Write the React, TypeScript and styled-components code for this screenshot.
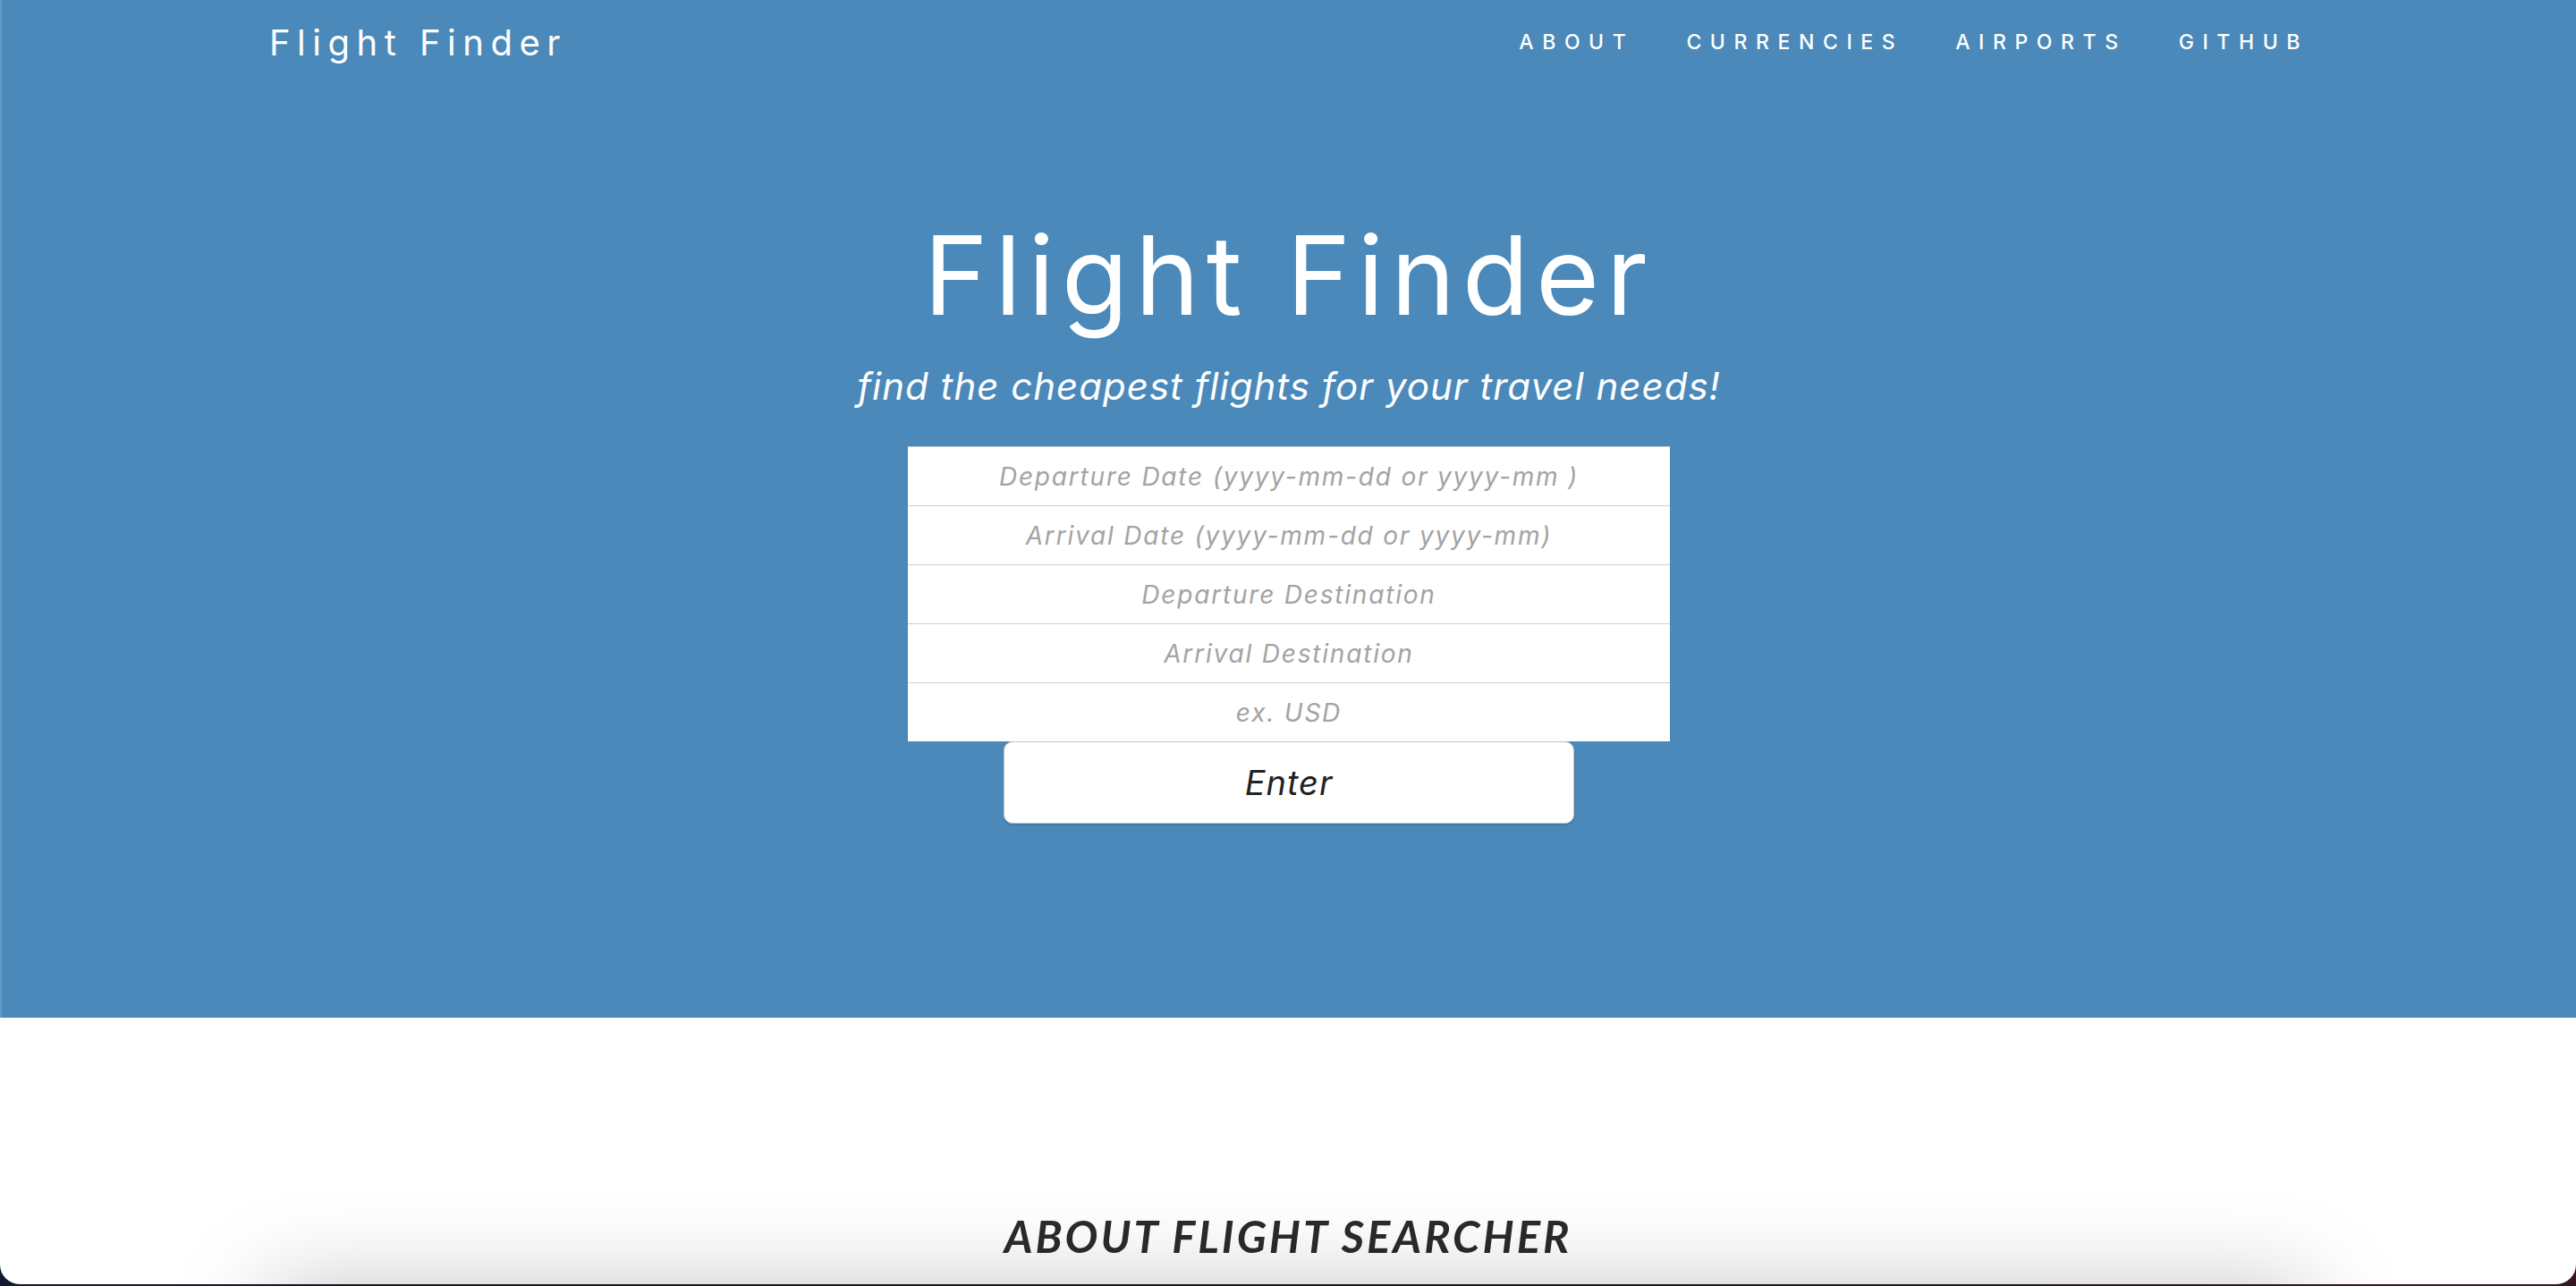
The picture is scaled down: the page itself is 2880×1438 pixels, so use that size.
import React from 'react';
import styled, { createGlobalStyle } from 'styled-components';

const GlobalStyle = createGlobalStyle`
  html, body {
    margin: 0;
    padding: 0;
    height: 100%;
  }
  body {
    background: #14161f;
    font-family: Inter, "Open Sans", sans-serif;
  }
  #root {
    height: 100%;
  }
  * {
    box-sizing: border-box;
  }
`;

const Frame = styled.div`
  height: 100vh;
  padding-bottom: 2px;
  background: linear-gradient(90deg, #0e1a2e 0%, #14161f 50%, #3a1426 100%);
`;

const Window = styled.div`
  height: 100%;
  overflow: hidden;
  background: #fff;
  border-radius: 0 0 22px 22px;
`;

const Hero = styled.header`
  height: 1138px;
  background: #4a89b9;
  border-left: 2px solid #5f9ac6;
  display: flex;
  flex-direction: column;
  align-items: center;
`;

const Nav = styled.nav`
  width: 2280px;
  height: 94px;
  display: flex;
  align-items: center;
  justify-content: space-between;
`;

const Brand = styled.a`
  color: #fff;
  font-size: 40px;
  font-weight: 400;
  letter-spacing: 7.5px;
  text-decoration: none;
`;

const NavLinks = styled.ul`
  display: flex;
  gap: 58px;
  margin: 0;
  padding: 0;
  list-style: none;
`;

const NavLink = styled.a`
  color: #fff;
  font-size: 23px;
  font-weight: 500;
  letter-spacing: 9.6px;
  text-decoration: none;
  text-transform: uppercase;
`;

const Title = styled.h1`
  margin: 153px 0 0;
  color: #fff;
  font-size: 122px;
  font-weight: 400;
  line-height: 1;
  letter-spacing: 7.6px;
`;

const Tagline = styled.p`
  margin: 42px 0 0;
  color: #fff;
  font-size: 42px;
  font-style: italic;
  line-height: 1;
  letter-spacing: 1px;
`;

const SearchForm = styled.form`
  margin-top: 46px;
  display: flex;
  flex-direction: column;
  align-items: center;
`;

const Fields = styled.div`
  width: 852px;
  display: flex;
  flex-direction: column;
  background: #fff;
`;

const Field = styled.input`
  height: 66px;
  border: none;
  border-top: 1px solid #cfcfcf;
  background: #fff;
  font-family: Inter, "Open Sans", sans-serif;
  font-size: 28px;
  font-style: italic;
  letter-spacing: 1.8px;
  text-align: center;
  outline: none;
  &::placeholder {
    color: #a3a3a3;
  }
`;

const EnterButton = styled.button`
  width: 638px;
  height: 92px;
  border: 1px solid #c4c4c4;
  border-radius: 10px;
  background: #fff;
  color: #222;
  font-family: Inter, "Open Sans", sans-serif;
  font-size: 38px;
  font-style: italic;
  letter-spacing: 1px;
  cursor: pointer;
  box-shadow: 0 2px 2px rgba(0, 0, 0, 0.12);
`;

const About = styled.section`
  padding-top: 220px;
  display: flex;
  flex-direction: column;
  align-items: center;
`;

const SectionHeading = styled.h2`
  margin: 0;
  color: #2b2b2b;
  font-family: Lato, "Liberation Sans", sans-serif;
  font-size: 49px;
  font-weight: 700;
  font-style: italic;
  line-height: 1;
  letter-spacing: 3px;
  text-transform: uppercase;
`;

const AboutCard = styled.div`
  width: 2280px;
  height: 400px;
  margin-top: 36px;
  background: #fff;
  box-shadow: 0 0 100px rgba(0, 0, 0, 0.25);
`;

const links = ['About', 'Currencies', 'Airports', 'Github'];

const fields = [
  'Departure Date (yyyy-mm-dd or yyyy-mm )',
  'Arrival Date (yyyy-mm-dd or yyyy-mm)',
  'Departure Destination',
  'Arrival Destination',
  'ex. USD'
];

const App: React.FC = () => {
  return (
    <>
      <GlobalStyle />
      <Frame>
        <Window>
          <Hero>
            <Nav>
              <Brand href="#top">Flight Finder</Brand>
              <NavLinks>
                {links.map(link => (
                  <li key={link}>
                    <NavLink href={`#${link.toLowerCase()}`}>{link}</NavLink>
                  </li>
                ))}
              </NavLinks>
            </Nav>
            <Title>Flight Finder</Title>
            <Tagline>find the cheapest flights for your travel needs!</Tagline>
            <SearchForm onSubmit={e => e.preventDefault()}>
              <Fields>
                {fields.map(placeholder => (
                  <Field key={placeholder} type="text" placeholder={placeholder} />
                ))}
              </Fields>
              <EnterButton type="submit">Enter</EnterButton>
            </SearchForm>
          </Hero>
          <About id="about">
            <SectionHeading>About Flight Searcher</SectionHeading>
            <AboutCard />
          </About>
        </Window>
      </Frame>
    </>
  );
};

export default App;
